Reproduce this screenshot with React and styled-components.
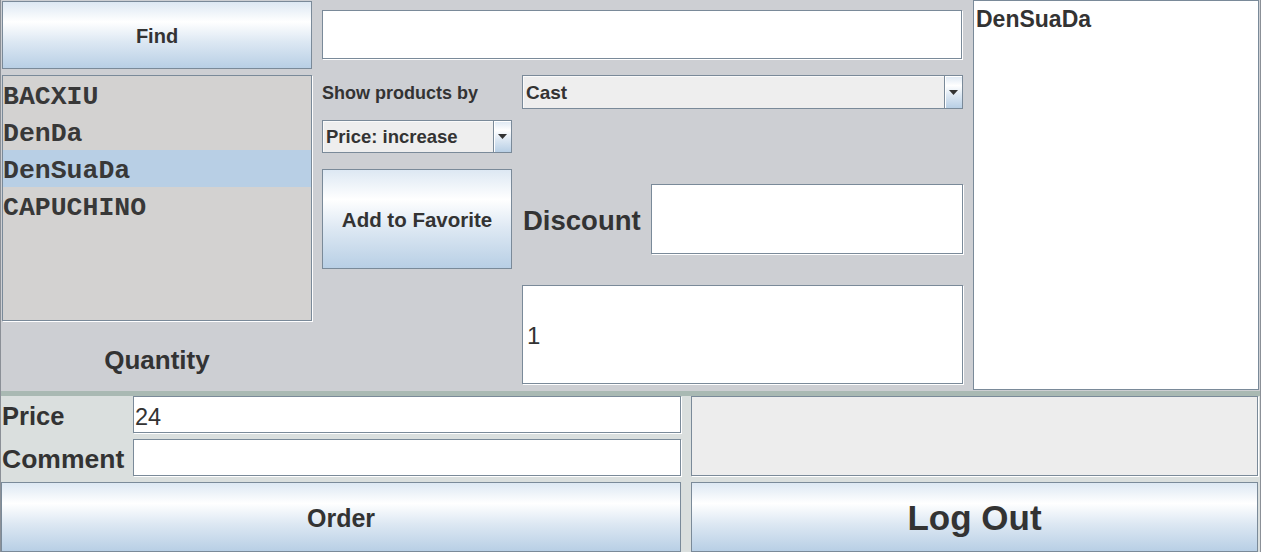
import React from 'react'
import styled, { createGlobalStyle } from 'styled-components'

const GlobalStyle = createGlobalStyle`
  html, body {
    margin: 0;
    padding: 0;
    background: #cdcfd3;
  }
  body {
    font-family: "Liberation Sans", Arial, sans-serif;
    color: #333333;
  }
  * {
    box-sizing: border-box;
  }
`

const Frame = styled.div`
  width: 1261px;
  height: 552px;
  display: flex;
  flex-direction: column;
  border-left: 1px solid #8b9097;
  border-right: 1px solid #8b9097;
  overflow: hidden;
`

const TopPanel = styled.div`
  height: 391px;
  display: flex;
  gap: 10px;
  padding-left: 1px;
  background: #cdcfd3;
`

const Column = styled.div`
  width: ${props => props.$width}px;
  display: flex;
  flex-direction: column;
  flex-shrink: 0;
`

const Button = styled.button`
  height: ${props => props.$height}px;
  margin-top: ${props => props.$top || 0}px;
  width: 100%;
  padding: 2px 0 0;
  border: 1px solid #7a8a99;
  background: linear-gradient(to bottom, #dde8f3 0%, #ffffff 30%, #dde8f3 60%, #b8cfe5 100%);
  font-family: "Liberation Sans", Arial, sans-serif;
  font-weight: bold;
  font-size: ${props => props.$size}px;
  color: #333333;
  cursor: pointer;
`

const ProductList = styled.ul`
  list-style: none;
  margin: 6px 0 0;
  padding: 0;
  height: 246px;
  background: #d3d2d1;
  border: 1px solid #7a8a99;
  box-shadow: 1px 1px 0 #ffffff;
`

const ProductItem = styled.li`
  height: 37px;
  padding: 5px 0 0 0;
  line-height: 33px;
  font-family: "Liberation Mono", "Courier New", monospace;
  font-weight: bold;
  font-size: 26.5px;
  color: #383838;
  background: ${props => (props.$selected ? '#b8cfe5' : 'transparent')};
`

const CenterLabel = styled.div`
  flex: 1;
  display: flex;
  align-items: center;
  justify-content: center;
  padding-top: 8px;
  font-weight: bold;
  font-size: 26px;
`

const Field = styled.input`
  display: block;
  width: 100%;
  height: ${props => props.$height}px;
  margin-top: ${props => props.$top || 0}px;
  padding: ${props => props.$padTop || 0}px 0 0 ${props => props.$pad || 2}px;
  border: 1px solid #7a8a99;
  box-shadow: 1px 1px 0 #ffffff;
  background: #ffffff;
  font-family: "Liberation Sans", Arial, sans-serif;
  font-size: ${props => props.$size || 24}px;
  color: #333333;
  outline: none;
`

const Row = styled.div`
  display: flex;
  gap: ${props => props.$gap || 0}px;
  margin-top: ${props => props.$top || 0}px;
  height: ${props => (props.$height ? `${props.$height}px` : 'auto')};
  align-items: ${props => props.$align || 'stretch'};
`

const SmallLabel = styled.div`
  height: 34px;
  line-height: 36px;
  font-weight: bold;
  font-size: 18px;
  white-space: nowrap;
`

const Combo = styled.div`
  display: flex;
  height: ${props => props.$height}px;
  margin-top: ${props => props.$top || 0}px;
  border: 1px solid #7a8a99;
  background: #eeeeee;
  box-shadow: inset 1px 1px 0 #fafafa;
`

const ComboText = styled.div`
  flex: 1;
  display: flex;
  align-items: center;
  padding: 1px 0 0 3px;
  font-weight: bold;
  font-size: ${props => props.$size || 18.5}px;
  white-space: nowrap;
`

const ArrowButton = styled.div`
  width: 18px;
  display: flex;
  align-items: center;
  justify-content: center;
  border-left: 1px solid #7a8a99;
  background: linear-gradient(to bottom, #dde8f3 0%, #ffffff 30%, #dde8f3 60%, #b8cfe5 100%);
  box-shadow: inset 1px 1px 0 #ffffff;
`

const BigLabel = styled.div`
  width: ${props => props.$width}px;
  flex-shrink: 0;
  display: flex;
  align-items: center;
  padding: 3px 0 0 1px;
  font-weight: bold;
  font-size: ${props => props.$size}px;
`

const FavoritePanel = styled.div`
  width: 286px;
  height: 390px;
  flex-shrink: 0;
  padding: 5px 2px;
  border: 1px solid #7a8a99;
  background: #ffffff;
  font-weight: bold;
  font-size: 23px;
`

const Separator = styled.div`
  height: 5px;
  background: #a9b9b3;
`

const BottomPanel = styled.div`
  height: 156px;
  display: grid;
  grid-template-columns: 680px 567px;
  grid-template-rows: 81px 70px;
  column-gap: 10px;
  row-gap: 5px;
  background: #dadfde;
`

const OrderForm = styled.div`
  display: grid;
  grid-template-columns: 132px 1fr;
  grid-template-rows: 37px 37px;
  row-gap: 6px;
  align-content: start;
`

const FormLabel = styled.div`
  display: flex;
  align-items: center;
  padding: 4px 0 0 1px;
  font-weight: bold;
  font-size: ${props => props.$size || 25.5}px;
  white-space: nowrap;
`

const InfoBox = styled.div`
  height: 80px;
  border: 1px solid #7a8a99;
  box-shadow: 1px 1px 0 #ffffff;
  background: #ededed;
`

const DownArrow = () => (
  <svg width="9" height="5" viewBox="0 0 9 5">
    <path d="M0 0H9L4.5 5Z" fill="#333333" />
  </svg>
)

const products = ['BACXIU', 'DenDa', 'DenSuaDa', 'CAPUCHINO']

const App = () => {
  return (
    <>
      <GlobalStyle />
      <Frame>
        <TopPanel>
          <Column $width={310}>
            <Button $height={68} $top={1} $size={20}>Find</Button>
            <ProductList>
              {products.map(name => (
                <ProductItem key={name} $selected={name === 'DenSuaDa'}>{name}</ProductItem>
              ))}
            </ProductList>
            <CenterLabel>Quantity</CenterLabel>
          </Column>

          <Column $width={641}>
            <Field $height={49} $top={10} style={{ width: 640 }} defaultValue="" />
            <Row $gap={10} $top={16}>
              <Column $width={190}>
                <SmallLabel>Show products by</SmallLabel>
                <Combo $height={33} $top={11}>
                  <ComboText>Price: increase</ComboText>
                  <ArrowButton><DownArrow /></ArrowButton>
                </Combo>
                <Button $height={100} $top={16} $size={20.5}>Add to Favorite</Button>
              </Column>
              <Column $width={441}>
                <Combo $height={34}>
                  <ComboText $size={19}>Cast</ComboText>
                  <ArrowButton><DownArrow /></ArrowButton>
                </Combo>
                <Row $top={75} $height={70}>
                  <BigLabel $width={129} $size={27.5}>Discount</BigLabel>
                  <Field $height={70} defaultValue="" />
                </Row>
                <Field $height={99} $top={31} $pad={4} $padTop={2} defaultValue="1" />
              </Column>
            </Row>
          </Column>

          <FavoritePanel>DenSuaDa</FavoritePanel>
        </TopPanel>

        <Separator />

        <BottomPanel>
          <OrderForm>
            <FormLabel>Price</FormLabel>
            <Field $height={37} $pad={1} $padTop={5} $size={23.5} defaultValue="24" />
            <FormLabel $size={26.5}>Comment</FormLabel>
            <Field $height={37} defaultValue="" />
          </OrderForm>
          <InfoBox />
          <Button $height={70} $size={25}>Order</Button>
          <Button $height={70} $size={35}>Log Out</Button>
        </BottomPanel>
      </Frame>
    </>
  )
}

export default App
